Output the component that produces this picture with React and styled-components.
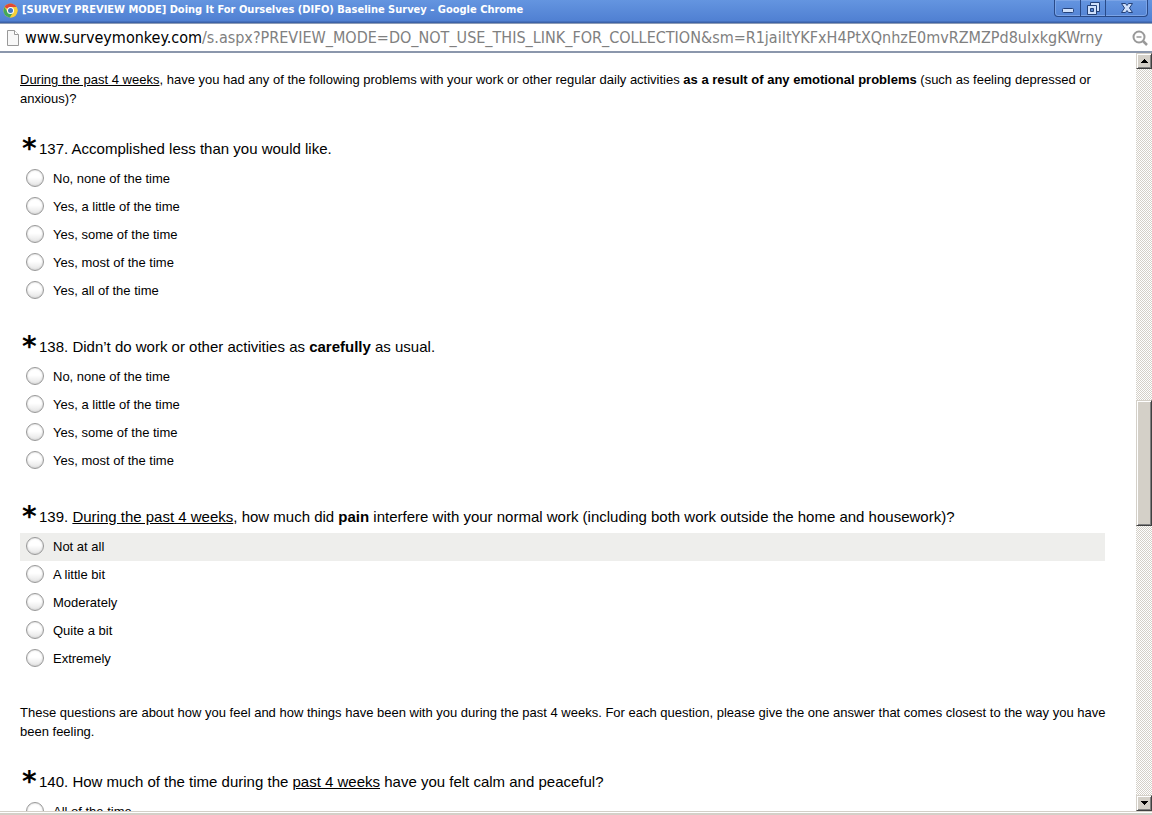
import styled, { createGlobalStyle, css } from "styled-components";

const GlobalStyle = createGlobalStyle`
  * { box-sizing: border-box; }
  html, body, #root { height: 100%; }
  body {
    margin: 0;
    overflow: hidden;
    background: #fff;
    color: #000;
    font: 13px/19px "Liberation Sans", Arial, sans-serif;
  }
  button { padding: 0; margin: 0; font: inherit; }
`;

const Window = styled.div`
  height: 100vh;
  display: flex;
  flex-direction: column;
  overflow: hidden;
`;

const TitleBar = styled.header`
  flex: 0 0 24px;
  display: flex;
  align-items: flex-start;
  padding-right: 4px;
  background: linear-gradient(#6495e0, #5080d2 21px, #3c62a8 22px, #3c62a8 23px, #8e9cb5 23px);
`;

const Title = styled.h1`
  flex: 1;
  display: flex;
  align-items: center;
  gap: 4px;
  min-width: 0;
  height: 20px;
  margin: 0;
  padding-left: 3px;
  overflow: hidden;
  white-space: nowrap;
  color: #fff;
  font: bold 11px/20px "DejaVu Sans Condensed", "DejaVu Sans", Tahoma, sans-serif;
`;

const WindowButtons = styled.div`
  display: flex;
  height: 17px;
  border: 1px solid #294a88;
  border-top: 0;
  border-radius: 0 0 4px 4px;
  box-shadow: inset 0 0 0 1px #7ba4e6;
`;

const WindowButton = styled.button`
  display: flex;
  align-items: center;
  justify-content: center;
  width: ${({ $wide }) => ($wide ? 42 : 25)}px;
  border: 0;
  border-left: ${({ $first }) => ($first ? "0" : "1px solid #294a88")};
  background: transparent;
`;

const AddressBar = styled.div`
  flex: 0 0 29px;
  display: flex;
  align-items: center;
  gap: 6px;
  padding: 0 4px 0 7px;
  background: #fff;
  border-bottom: 2px solid #8b97ac;
`;

const Url = styled.a`
  flex: 1;
  min-width: 0;
  overflow: hidden;
  white-space: nowrap;
  color: #808080;
  text-decoration: none;
  font: 16px/24px "DejaVu Sans Condensed", Tahoma, sans-serif;
`;

const Host = styled.span`
  color: #000;
`;

const ZoomButton = styled.button`
  display: flex;
  border: 0;
  background: transparent;
`;

const Viewport = styled.div`
  flex: 1;
  min-height: 0;
  display: flex;
`;

const Page = styled.main`
  flex: 1;
  min-width: 0;
  overflow: hidden;
  padding: 17px 29px 0 20px;
`;

const Intro = styled.p`
  margin: 0 0 28px;
`;

const Question = styled.fieldset`
  min-width: 0;
  margin: 0 2px ${({ $last }) => ($last ? 30 : 29)}px 0;
  padding: 0;
  border: 0;
`;

const Legend = styled.legend`
  display: flex;
  width: 100%;
  height: 24px;
  margin-bottom: 5px;
  padding: 0 0 0 2px;
  font-size: 15px;
  line-height: 26px;
`;

const Star = styled.span`
  width: 17px;
  font: bold 28px/26px "DejaVu Sans", sans-serif;
`;

const Option = styled.label`
  display: flex;
  align-items: center;
  gap: 9px;
  height: 28px;
  padding: 0 6px 2px;
  ${({ $active }) => $active && css`background: #eeeeec;`}
`;

const Radio = styled.input`
  appearance: none;
  flex: none;
  width: 18px;
  height: 18px;
  margin: 0;
  border: 1px solid #999;
  border-radius: 50%;
  background: linear-gradient(#fff 45%, #e4e4e4);
  box-shadow: inset 0 0 2px #bbb;

  &:checked {
    background: radial-gradient(#444 4px, #f4f4f4 5px);
  }
`;

const ScrollBar = styled.div`
  flex: 0 0 16px;
  display: flex;
  flex-direction: column;
  background: repeating-conic-gradient(#d4d0c8 0 25%, #fff 0 50%) 0 0 / 2px 2px;
`;

const raised = css`
  background: #d4d0c8;
  border: 1px solid #d4d0c8;
  border-right-color: #404040;
  border-bottom-color: #404040;
  box-shadow: inset 1px 1px #fff, inset -1px -1px #808080;
`;

const ScrollButton = styled.button`
  ${raised}
  flex: 0 0 16px;
  display: flex;
  align-items: center;
  justify-content: center;
`;

const ScrollTrack = styled.div`
  flex: 1;
  display: grid;
  grid-template-rows: 331fr 126fr 269fr;
`;

const ScrollThumb = styled.div`
  ${raised}
  grid-row: 2;
`;

const WindowEdge = styled.footer`
  flex: 0 0 4px;
  background: #d4d0c8;
  border-top: 1px solid #d4d0c8;
  box-shadow: inset 0 1px #fff;
`;

const TIMES = [
    "No, none of the time",
    "Yes, a little of the time",
    "Yes, some of the time",
    "Yes, most of the time",
    "Yes, all of the time",
];

const AMOUNTS = ["Not at all", "A little bit", "Moderately", "Quite a bit", "Extremely"];

function ChromeLogo() {
    return (
        <svg width="15" height="15" viewBox="0 0 30 30" aria-hidden="true">
            <circle cx="15" cy="15" r="14" fill="#f5cf3a" />
            <path d="M15 15 3 8A14 14 0 0 1 27 8Z" fill="#df4937" />
            <path d="M3 8A14 14 0 0 0 14 29L21 18 9 18Z" fill="#43a85a" />
            <path d="M15 8H27A14 14 0 0 1 14 29L21 18Z" fill="#f5cf3a" />
            <circle cx="15" cy="15" r="7" fill="#fff" />
            <circle cx="15" cy="15" r="5" fill="#4278c4" />
        </svg>
    );
}

function PageIcon() {
    return (
        <svg width="12" height="16" viewBox="0 0 12 16" fill="#f8f8f8" stroke="#999" aria-hidden="true">
            <path d="M.5.5h7l4 4v11H.5z" />
            <path d="M7.5.5v4h4" fill="#fff" />
        </svg>
    );
}

function Arrow({ down }) {
    return (
        <svg width="7" height="4" viewBox="0 0 7 4" shapeRendering="crispEdges" aria-hidden="true">
            <path d={down ? "M0 0h7v1H6v1H5v1H4v1H3V3H2V2H1V1H0z" : "M3 0h1v1h1v1h1v1h1v1H0V3h1V2h1V1h1z"} />
        </svg>
    );
}

function QuestionBlock({ number, options, active, last, children }) {
    return (
        <Question $last={last}>
            <Legend>
                <Star>*</Star>
                <span>{number}. {children}</span>
            </Legend>
            {options.map((text) => (
                <Option key={text} $active={text === active}>
                    <Radio type="radio" name={`q${number}`} />
                    {text}
                </Option>
            ))}
        </Question>
    );
}

export default function App() {
    return (
        <Window>
            <GlobalStyle />
            <TitleBar>
                <Title>
                    <ChromeLogo />
                    [SURVEY PREVIEW MODE] Doing It For Ourselves (DIFO) Baseline Survey - Google Chrome
                </Title>
                <WindowButtons>
                    <WindowButton $first aria-label="Minimize">
                        <svg width="12" height="12" viewBox="0 0 12 12">
                            <rect x=".5" y="6.5" width="11" height="4" rx="1" fill="#cfe0fa" stroke="#24427a" />
                        </svg>
                    </WindowButton>
                    <WindowButton aria-label="Restore">
                        <svg width="13" height="13" viewBox="0 0 13 13" fill="#cfe0fa" stroke="#24427a">
                            <path d="M3.5.5h9v9h-9z" />
                            <path d="M.5 3.5h9v9h-9z" />
                            <path d="M3.5 6.5h3v3h-3z" fill="#5585d4" />
                        </svg>
                    </WindowButton>
                    <WindowButton $wide aria-label="Close">
                        <svg width="12" height="12" viewBox="0 0 12 12">
                            <path d="M.5 1.5h4L6 3.5l1.500-2h4L8.500 6l3 4.500h-4L6 8.500l-1.500 2h-4L3.500 6z" fill="#cfe0fa" stroke="#24427a" />
                        </svg>
                    </WindowButton>
                </WindowButtons>
            </TitleBar>
            <AddressBar>
                <PageIcon />
                <Url href="#">
                    <Host>www.surveymonkey.com</Host>
                    /s.aspx?PREVIEW_MODE=DO_NOT_USE_THIS_LINK_FOR_COLLECTION&amp;sm=R1jaiItYKFxH4PtXQnhzE0mvRZMZPd8uIxkgKWrny
                </Url>
                <ZoomButton aria-label="Zoom">
                    <svg width="16" height="16" viewBox="0 0 16 16" fill="none" stroke="#999">
                        <circle cx="7" cy="7" r="5.500" strokeWidth="2" />
                        <path d="M4.500 7h5" strokeWidth="1.500" />
                        <path d="m11 11 4 4" strokeWidth="2.500" />
                    </svg>
                </ZoomButton>
            </AddressBar>
            <Viewport>
                <Page>
                    <Intro>
                        <u>During the past 4 weeks</u>, have you had any of the following problems with your work or
                        other regular daily activities <b>as a result of any emotional problems</b> (such as feeling
                        depressed or anxious)?
                    </Intro>
                    <QuestionBlock number={137} options={TIMES}>
                        Accomplished less than you would like.
                    </QuestionBlock>
                    <QuestionBlock number={138} options={TIMES.slice(0, 4)}>
                        Didn’t do work or other activities as <b>carefully</b> as usual.
                    </QuestionBlock>
                    <QuestionBlock number={139} options={AMOUNTS} active="Not at all" last>
                        <u>During the past 4 weeks</u>, how much did <b>pain</b> interfere with your normal work
                        (including both work outside the home and housework)?
                    </QuestionBlock>
                    <Intro>
                        These questions are about how you feel and how things have been with you during the past 4
                        weeks. For each question, please give the one answer that comes closest to the way you have
                        been feeling.
                    </Intro>
                    <QuestionBlock number={140} options={["All of the time"]}>
                        How much of the time during the <u>past 4 weeks</u> have you felt calm and peaceful?
                    </QuestionBlock>
                </Page>
                <ScrollBar>
                    <ScrollButton aria-label="Scroll up"><Arrow /></ScrollButton>
                    <ScrollTrack><ScrollThumb /></ScrollTrack>
                    <ScrollButton aria-label="Scroll down"><Arrow down /></ScrollButton>
                </ScrollBar>
            </Viewport>
            <WindowEdge />
        </Window>
    );
}
